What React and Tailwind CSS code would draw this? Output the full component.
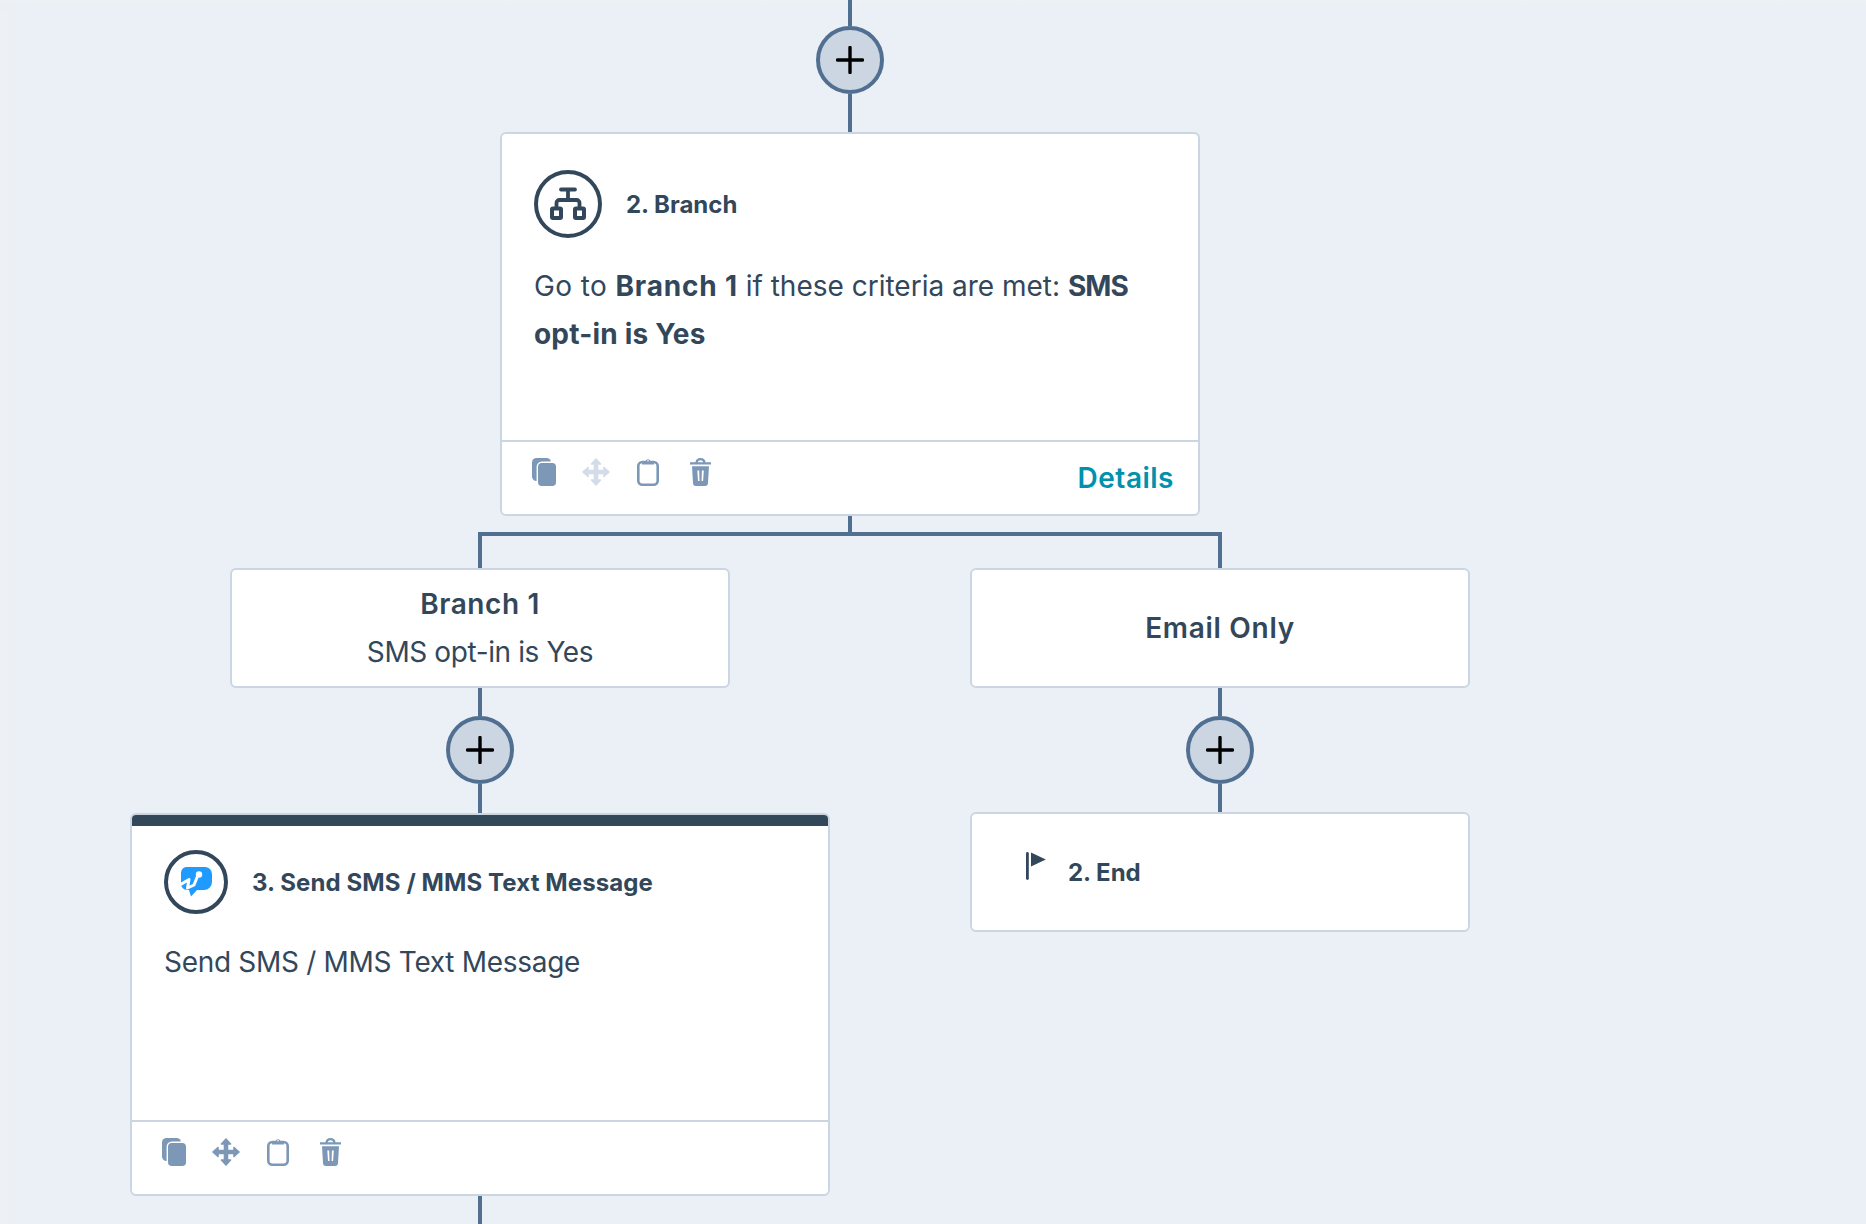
const FONT = "font-['Inter','Liberation_Sans',sans-serif]";

function Line({ h }) {
  return <div className="w-1 bg-[#516f90] shrink-0" style={{ height: h }} />;
}

function Plus() {
  return (
    <div className="w-[68px] h-[68px] shrink-0 rounded-full bg-[#cbd6e2] border-[4px] border-[#516f90] flex items-center justify-center">
      <svg width="28" height="28" viewBox="0 0 28 28" fill="none" stroke="#000" strokeWidth="3.4" strokeLinecap="round">
        <path d="M14 1.500v25M1.500 14h25" />
      </svg>
    </div>
  );
}

function Copy() {
  return (
    <svg width="24" height="28" viewBox="0 0 24 28" fill="#7c98b6">
      <rect x="0" y="0" width="19" height="23" rx="4.500" />
      <rect x="5.300" y="4.300" width="19.400" height="24.400" rx="4.500" stroke="#fff" strokeWidth="1.400" />
    </svg>
  );
}

function Move({ color }) {
  return (
    <svg width="28" height="28" viewBox="0 0 28 28" fill={color} stroke={color} strokeWidth="1.600" strokeLinejoin="round">
      <path d="M14 1l4.500 5h-3v6.500H22v-3l5 4.500-5 4.500v-3h-6.500V22h3L14 27l-4.500-5h3v-6.500H6v3L1 14l5-4.500v3h6.500V6h-3z" />
    </svg>
  );
}

function Clip() {
  return (
    <svg width="22" height="28" viewBox="0 0 22 28" fill="none">
      <rect x="1.300" y="4" width="19.400" height="22.700" rx="4" stroke="#7c98b6" strokeWidth="2.600" />
      <path d="M5 5.200L8.500 3.200a2.600 2.600 0 0 1 5 0L17 5.200v1.300H5z" fill="#7c98b6" />
      <circle cx="11" cy="2.800" r=".8" fill="#fff" />
    </svg>
  );
}

function Trash() {
  return (
    <svg width="21" height="28" viewBox="0 0 21 28" fill="#7c98b6">
      <path fillRule="evenodd" d="M5.500 4.200C5.500 1.800 7.500 0 10.500 0s5 1.800 5 4.200H21v2.300H0V4.200zM7.800 4.200h5.400C13 3 12 2.200 10.500 2.200S8 3 7.800 4.200z" />
      <path fillRule="evenodd" d="M2 8.300h17l-1 16.700a3 3 0 0 1-3 3H6a3 3 0 0 1-3-3zM7.300 12.500l.7 10.500h1.500l-.3-10.500zM13.800 12.500l-1.900 0-.3 10.500h1.500z" />
    </svg>
  );
}

function Tools({ moveColor = "#7c98b6" }) {
  return (
    <div className="flex items-start">
      <div className="w-[50px]"><Copy /></div>
      <div className="w-[55px]"><Move color={moveColor} /></div>
      <div className="w-[53px]"><Clip /></div>
      <Trash />
    </div>
  );
}

function BranchIcon() {
  return (
    <div className="w-[68px] h-[68px] shrink-0 rounded-full border-[4px] border-[#33475b] flex items-center justify-center">
      <svg width="60" height="60" viewBox="0 0 60 60" fill="none" stroke="#33475b" strokeWidth="3.800" strokeLinecap="round" strokeLinejoin="round">
        <path d="M23 15.500h14M30 15.500v10.500M18.500 33v-4a3 3 0 0 1 3-3h17a3 3 0 0 1 3 3v4" />
        <rect x="14" y="34.500" width="9" height="9.500" rx="1" strokeWidth="4" />
        <rect x="37" y="34.500" width="9" height="9.500" rx="1" strokeWidth="4" />
      </svg>
    </div>
  );
}

function SmsIcon() {
  return (
    <div className="w-[64px] h-[64px] shrink-0 rounded-full border-[4px] border-[#33475b] flex items-center justify-center">
      <svg width="31" height="30" viewBox="0 0 31 30">
        <path fill="#1f9bff" d="M7 0h17a7 7 0 0 1 7 7v8a8 8 0 0 1-8 8h-7l-6 6.500-2-6.500H6a6 6 0 0 1-6-6V6a6 6 0 0 1 7-6z" />
        <path fill="none" stroke="#fff" strokeWidth="3" strokeLinecap="round" strokeLinejoin="round" d="M.5 17L8 12.500 6.500 21 13 18l4-10" />
        <circle cx="18" cy="7.500" r="3.200" fill="#fff" />
      </svg>
    </div>
  );
}

function Flag() {
  return (
    <svg width="20" height="28" viewBox="0 0 20 28" fill="#33475b">
      <rect x="0" y="0" width="2.800" height="28" rx="1.400" />
      <path d="M5 .5L19.800 7.500 5 14.500z" />
    </svg>
  );
}

export default function App() {
  return (
    <div className={`${FONT} relative w-full h-[1224px] overflow-hidden bg-[#eaf0f6] text-[#33475b]`}>
      <div className="absolute inset-y-0 left-0 w-[28px] bg-gradient-to-r from-[#edf1f5] to-[#eaf0f6]" />
      <div className="absolute inset-x-0 top-0 h-[10px] bg-gradient-to-b from-[#edf1f5] to-[#eaf0f6]" />
      <div className="relative flex flex-col">
        <div className="flex flex-col items-center w-[1700px]">
          <Line h={26} />
          <Plus />
          <Line h={38} />
          <div className="w-[700px] h-[384px] bg-white border-2 border-[#cbd6e2] rounded-[6px] flex flex-col">
            <div className="flex-1 px-[32px] pt-[36px]">
              <div className="flex items-center gap-[24px]">
                <BranchIcon />
                <div className="text-[24px] font-bold leading-[32px] pt-[1px]">2. Branch</div>
              </div>
              <div className="mt-[24px] text-[28px] leading-[48px] w-[620px]">
                <span className="tracking-[0.4px]">Go to </span><b className="font-bold tracking-[0.8px]">Branch 1</b> if these criteria are met: <b className="font-bold tracking-[-1px]">SMS</b> <b className="font-bold tracking-[0.2px]">opt-in is Yes</b>
              </div>
            </div>
            <div className="h-[74px] border-t-2 border-[#cbd6e2] flex items-start justify-between pl-[30px] pr-[24px] pt-[16px]">
              <Tools moveColor="#d3dce8" />
              <div className="text-[28px] font-semibold tracking-[0.5px] text-[#0091ae] leading-[32px] pt-[4px]">Details</div>
            </div>
          </div>
          <Line h={16} />
          <div className="w-[744px] h-[36px] border-t-[4px] border-x-[4px] border-[#516f90]" />
        </div>

        <div className="flex items-start pl-[130px]">
          <div className="w-[700px] flex flex-col items-center">
            <div className="w-[500px] h-[120px] bg-white border-2 border-[#cbd6e2] rounded-[6px] flex flex-col items-center justify-center">
              <div className="text-[28px] font-semibold tracking-[0.6px] leading-[48px]">Branch 1</div>
              <div className="text-[28px] tracking-[-0.4px] leading-[48px]">SMS opt-in is Yes</div>
            </div>
            <Line h={28} />
            <Plus />
            <Line h={29} />
            <div className="w-[700px] h-[383px] bg-white border-2 border-[#cbd6e2] rounded-[6px] flex flex-col overflow-hidden">
              <div className="h-[11px] bg-[#33475b] shrink-0" />
              <div className="flex-1 pl-[32px] pt-[24px]">
                <div className="flex items-center gap-[24px]">
                  <SmsIcon />
                  <div className="text-[24px] font-bold tracking-[0.1px] leading-[32px] pt-[2px]">3. Send SMS / MMS Text Message</div>
                </div>
                <div className="mt-[24px] text-[28px] tracking-[-0.3px] leading-[48px]">Send SMS / MMS Text Message</div>
              </div>
              <div className="h-[74px] border-t-2 border-[#cbd6e2] pl-[30px] pt-[16px]">
                <Tools />
              </div>
            </div>
            <Line h={40} />
          </div>

          <div className="ml-[140px] w-[500px] flex flex-col items-center">
            <div className="w-full h-[120px] bg-white border-2 border-[#cbd6e2] rounded-[6px] flex items-center justify-center text-[28px] font-semibold tracking-[0.7px]">
              Email Only
            </div>
            <Line h={28} />
            <Plus />
            <Line h={28} />
            <div className="w-full h-[120px] bg-white border-2 border-[#cbd6e2] rounded-[6px] flex items-start pl-[54px] pt-[38px] gap-[22px]">
              <Flag />
              <div className="text-[24px] font-bold leading-[32px] pt-[5px]">2. End</div>
            </div>
          </div>
        </div>
      </div>
    </div>
  );
}
